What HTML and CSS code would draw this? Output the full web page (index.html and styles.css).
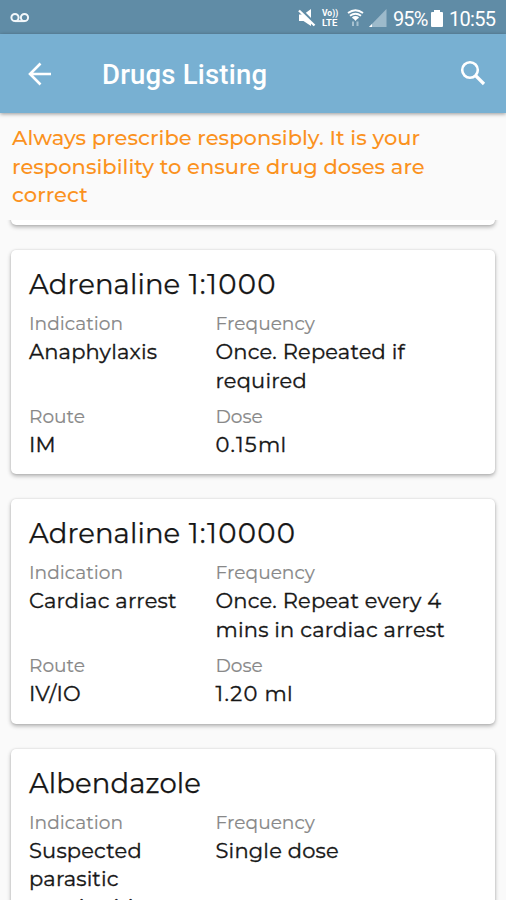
FILE: index.html
```html
<!DOCTYPE html>
<html lang="en">
<head>
<meta charset="utf-8">
<title>Drugs Listing</title>
<link rel="stylesheet" href="styles.css">
</head>
<body>
<div class="status">
  <svg class="voicemail" width="20" height="12" viewBox="0 0 20 12"><g fill="none" stroke="#f2f7fa" stroke-width="2"><circle cx="5" cy="5.5" r="3.6"/><circle cx="14.5" cy="5.5" r="3.6"/><path d="M5 9.1h9.5"/></g></svg>
  <div class="status-right">
    <svg class="mute" width="18" height="18" viewBox="0 0 18 18"><path d="M1 5.500h4.500L13 0v17l-7.500-5H1z" fill="#fff"/><path d="M2 0l15 15" stroke="#608ca6" stroke-width="3"/><path d="M1 1.500l15.500 15" stroke="#fff" stroke-width="2.400"/></svg>
    <div class="volte"><span class="vo">Vo))</span><span>LTE</span></div>
    <svg class="wifi" width="17" height="18" viewBox="0 0 17 18"><g fill="none" stroke="#fff" stroke-width="1.9"><path d="M1 4q7.500-5.500 15 0M3 6.700q5.500-4 11 0M5.500 9q3-2 6 0"/></g><path d="M6 9h5l-2.500 3z" fill="#fff"/><path d="M6 12.500v4.500M10.500 12.500v4.500" stroke="#a6c1d0" stroke-width="2"/></svg>
    <svg class="signal" width="18" height="18" viewBox="0 0 18 18"><path d="M0 18L17.500 0v18z" fill="#9dbacb"/><path d="M0 18l3-3v3z" fill="#fff"/></svg>
    <span class="percent">95%</span>
    <svg class="battery" width="12" height="17" viewBox="0 0 12 17"><path d="M3 0h6v2h2q1 0 1 1v13q0 1-1 1H1q-1 0-1-1V3q0-1 1-1h2z" fill="#fff"/></svg>
    <span class="clock">10:55</span>
  </div>
</div>
<header class="appbar">
  <svg class="back" width="24" height="24" viewBox="0 0 24 24"><path d="M23 12H2M12.500 1.500L2 12l10.500 10.500" fill="none" stroke="#fff" stroke-width="2.600"/></svg>
  <h1>Drugs Listing</h1>
  <svg class="search" width="26" height="26" viewBox="0 0 26 26"><g fill="none" stroke="#fff" stroke-width="2.600"><circle cx="10" cy="10" r="7.800"/><path d="M15.500 15.500l8.500 8.500" stroke-width="3.200"/></g></svg>
</header>
<p class="notice">Always prescribe responsibly. It is your<br>responsibility to ensure drug doses are<br>correct</p>
<main>
  <div class="card previous"></div>
  <section class="card">
    <h2>Adrenaline <span class="num">1:1000</span></h2>
    <dl>
      <div><dt>Indication</dt><dd>Anaphylaxis</dd></div>
      <div><dt>Frequency</dt><dd>Once. Repeated if<br>required</dd></div>
      <div><dt>Route</dt><dd>IM</dd></div>
      <div><dt>Dose</dt><dd><span class="num">0.15</span>ml</dd></div>
    </dl>
  </section>
  <section class="card">
    <h2>Adrenaline <span class="num">1:10000</span></h2>
    <dl>
      <div><dt>Indication</dt><dd>Cardiac arrest</dd></div>
      <div><dt>Frequency</dt><dd>Once. Repeat every 4<br>mins in cardiac arrest</dd></div>
      <div><dt>Route</dt><dd>IV/IO</dd></div>
      <div><dt>Dose</dt><dd><span class="num">1.20</span> ml</dd></div>
    </dl>
  </section>
  <section class="card last">
    <h2>Albendazole</h2>
    <dl>
      <div><dt>Indication</dt><dd>Suspected<br>parasitic<br>meningitis</dd></div>
      <div><dt>Frequency</dt><dd>Single dose</dd></div>
    </dl>
  </section>
</main>
</body>
</html>
```
FILE: styles.css
```css
* { box-sizing: border-box; }
body {
  margin: 0;
  height: 900px;
  overflow: hidden;
  display: flex;
  flex-direction: column;
  background: #fafafa;
  color: #161616;
  font-family: Montserrat, Inter, sans-serif;
}
.status {
  flex: none;
  height: 34px;
  display: flex;
  justify-content: space-between;
  padding: 0 10px 0 10px;
  background: #608ca6;
  color: #fff;
  font-family: Roboto, sans-serif;
}
.voicemail { margin-top: 12px; }
.status-right { display: flex; align-items: flex-start; }
.mute { margin: 9px 6px 0 0; }
.volte { display: flex; flex-direction: column; width: 17px; margin: 8px 8px 0 0; font-size: 9.500px; line-height: 10px; font-weight: 700; }
.vo { font-size: 8.500px; }
.wifi { margin: 9px 5px 0 0; }
.signal { margin: 9px 6px 0 0; }
.percent, .clock { font-size: 20px; line-height: 38px; white-space: nowrap; }
.percent { width: 34px; letter-spacing: -.9px; }
.battery { margin: 10px 6px 0 4px; }
.clock { width: 47px; letter-spacing: -.7px; }
.appbar {
  flex: none;
  height: 79px;
  display: flex;
  align-items: center;
  padding: 0 20px 0 28px;
  background: #78b0d2;
  box-shadow: 0 1px 4px rgba(0,0,0,.4);
  position: relative;
  z-index: 2;
}
.search { margin-top: -2px; }
h1 { margin: 3px auto 0 50px; color: #fff; font: 500 27.500px/32px Roboto, sans-serif; letter-spacing: .2px; }
.notice {
  flex: none;
  height: 107px;
  margin: 0;
  padding: 11px 12px 0;
  color: #fb921e;
  background: #fafafa;
  font-size: 21px;
  font-weight: 500;
  letter-spacing: .03px;
  line-height: 28.500px;
  white-space: nowrap;
  position: relative;
  z-index: 1;
}
main { flex: 1; min-height: 0; display: flex; flex-direction: column; gap: 25px; padding: 0 11px; }
.card {
  flex: none;
  height: 224.400px;
  padding: 16px 18px 0;
  background: #fff;
  border-radius: 5px;
  box-shadow: 0 2px 4px rgba(0,0,0,.3), 0 0 2px rgba(0,0,0,.12);
}
.card.previous { height: 20px; margin-top: -15px; }
h2 { margin: 0; font-size: 27.500px; font-weight: 400; letter-spacing: .1px; word-spacing: 1px; line-height: 36px; white-space: nowrap; -webkit-text-stroke: .25px; }
dl { margin: 9px 0 0; display: grid; grid-template-columns: 186.500px 1fr; row-gap: 8.500px; }
dt { color: #888; font-size: 18.600px; line-height: 26px; -webkit-text-stroke: .15px; }
dd { margin: 0; padding-top: 1px; font-size: 21px; font-weight: 400; letter-spacing: .18px; line-height: 28.500px; white-space: nowrap; -webkit-text-stroke: .35px; }
.last dd { line-height: 28.200px; }
.num { letter-spacing: 1.300px; }
```
